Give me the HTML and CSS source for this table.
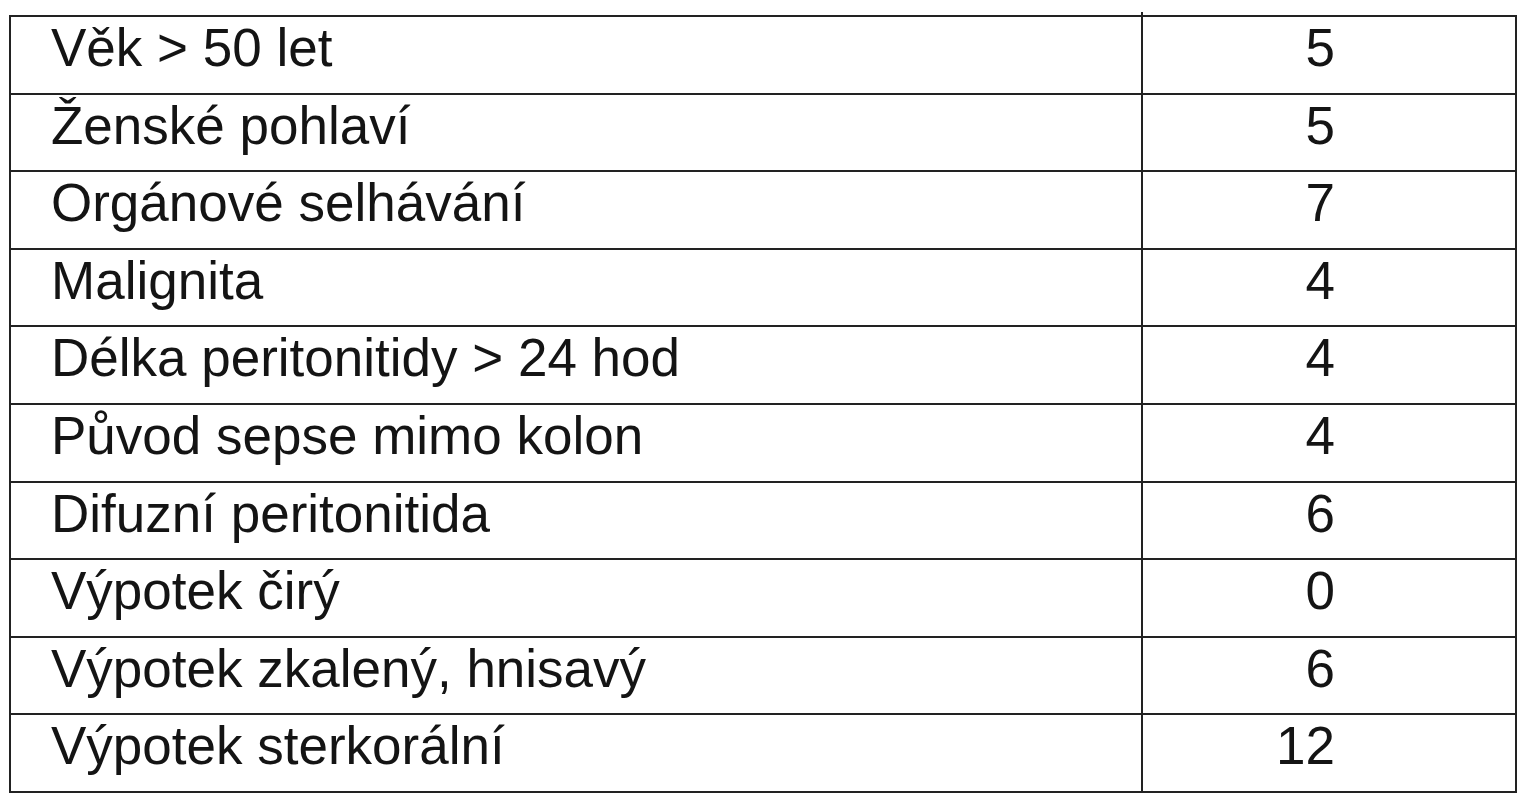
FILE: index.html
```html
<!DOCTYPE html>
<html lang="cs">
<head>
<meta charset="utf-8">
<title>Skóre</title>
<link rel="stylesheet" href="styles.css">
</head>
<body>
<table class="score">
  <tbody>
    <tr><td class="label">Věk &gt; 50 let</td><td class="value first">5</td></tr>
    <tr><td class="label">Ženské pohlaví</td><td class="value">5</td></tr>
    <tr><td class="label">Orgánové selhávání</td><td class="value">7</td></tr>
    <tr><td class="label">Malignita</td><td class="value">4</td></tr>
    <tr><td class="label">Délka peritonitidy &gt; 24 hod</td><td class="value">4</td></tr>
    <tr><td class="label">Původ sepse mimo kolon</td><td class="value">4</td></tr>
    <tr><td class="label">Difuzní peritonitida</td><td class="value">6</td></tr>
    <tr><td class="label">Výpotek čirý</td><td class="value">0</td></tr>
    <tr><td class="label">Výpotek zkalený, hnisavý</td><td class="value">6</td></tr>
    <tr><td class="label">Výpotek sterkorální</td><td class="value">12</td></tr>
  </tbody>
</table>
</body>
</html>
```

FILE: styles.css
```css
html, body {
  margin: 0;
  padding: 0;
  background: #ffffff;
}

body {
  padding: 15px 0 0 9px;
  font-family: "Liberation Sans", Arial, sans-serif;
  color: #141414;
}

.score {
  border-collapse: collapse;
  width: 1508px;
  table-layout: fixed;
}

.score td {
  border: 2px solid #222222;
  height: 77.6px;
  box-sizing: border-box;
  padding: 4px 0 0 0;
  vertical-align: top;
  font-size: 53px;
  line-height: 53px;
  white-space: nowrap;
}

.score .label {
  width: 1132px;
  padding-left: 40px;
  text-align: left;
}

.score .value {
  text-align: right;
  padding-right: 180px;
}

.score .first {
  position: relative;
}

.score .first::before {
  content: "";
  position: absolute;
  left: -2px;
  top: -5px;
  width: 2px;
  height: 4px;
  background: #222222;
}
```
